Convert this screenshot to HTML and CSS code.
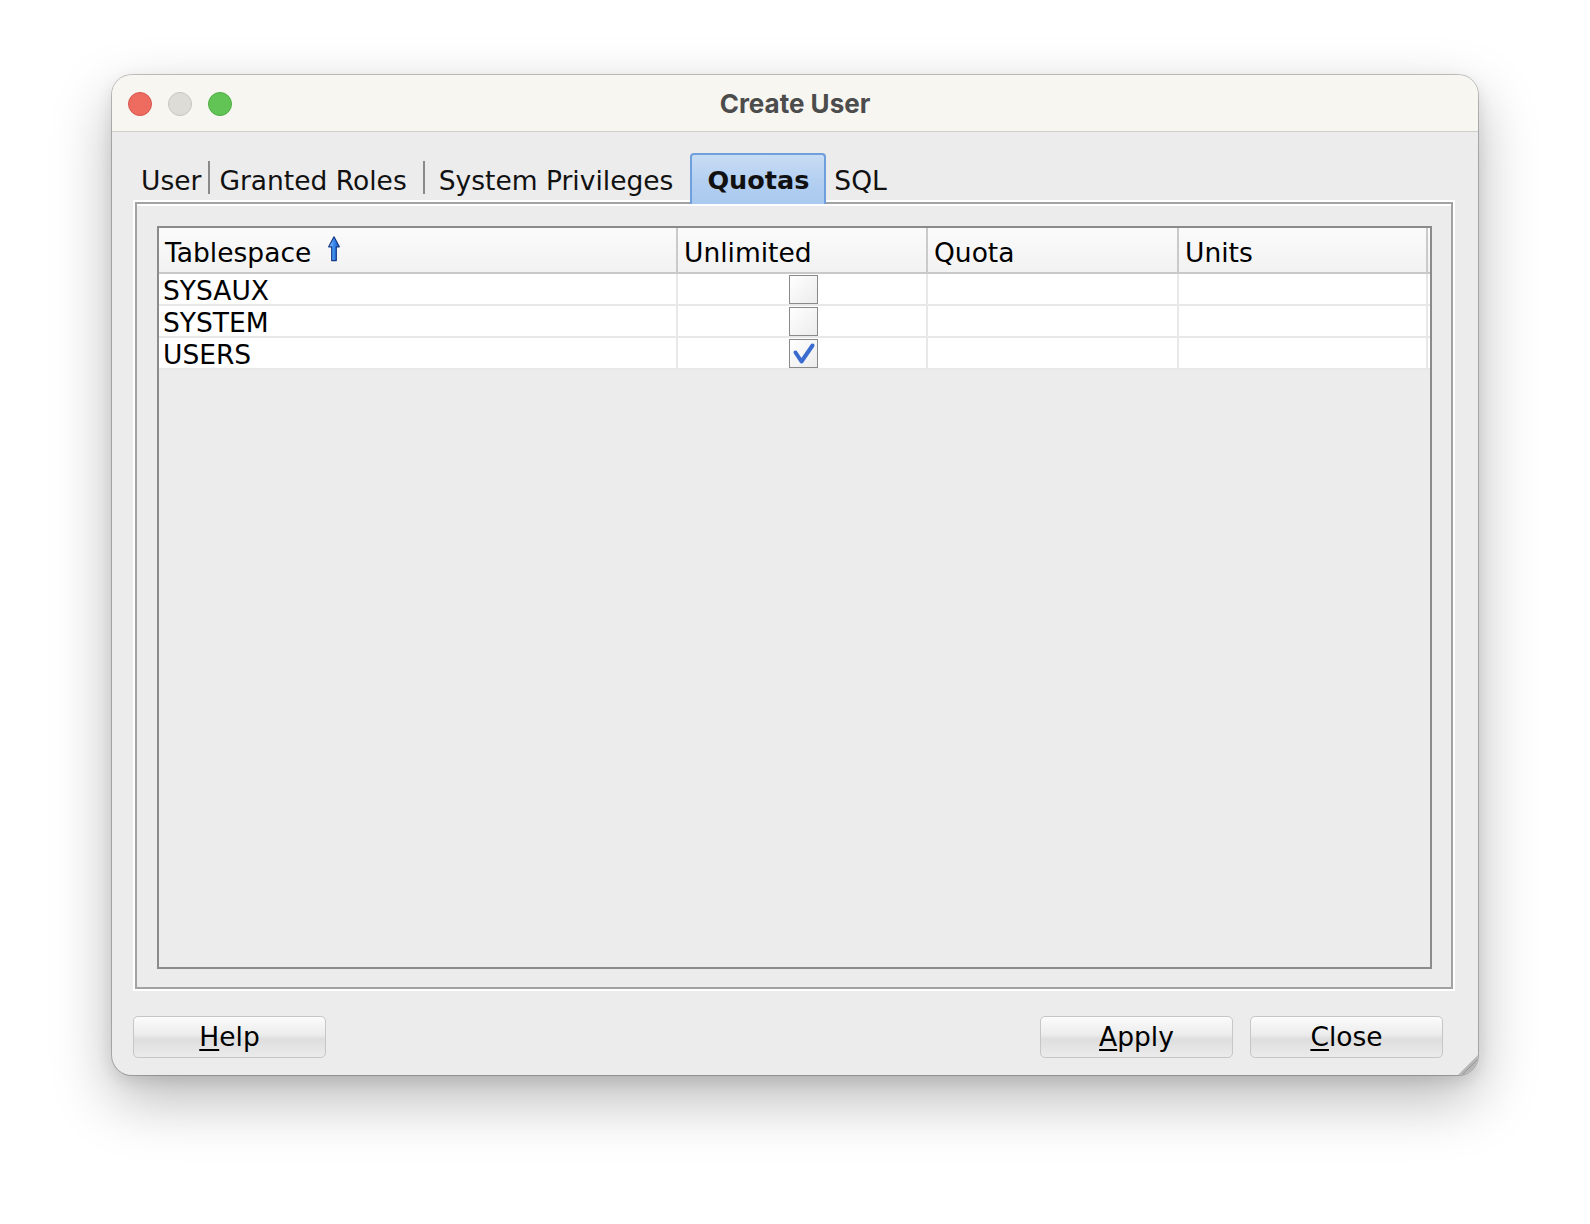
FILE: index.html
```html
<!DOCTYPE html>
<html lang="en">

<head>
    <meta charset="UTF-8">
    <title>Create User</title>
    <link rel="stylesheet" href="styles.css">
</head>

<body>
    <div class="ventana">
        <div class="barra-titulo">
            <div class="semaforo">
                <span class="luz roja"></span>
                <span class="luz gris"></span>
                <span class="luz verde"></span>
            </div>
            <div class="titulo">Create User</div>
            <div></div>
        </div>

        <div class="contenido">
            <div class="pestanas">
                <span class="pestana">User</span>
                <span class="separador"></span>
                <span class="pestana roles">Granted Roles</span>
                <span class="separador ancho"></span>
                <span class="pestana sistema">System Privileges</span>
                <span class="pestana activa">Quotas</span>
                <span class="pestana sql">SQL</span>
            </div>

            <div class="panel">
                <div class="tabla">
                    <div class="fila cabecera">
                        <div class="celda">Tablespace
                            <svg class="orden" width="12" height="26" viewBox="0 0 12 26">
                                <defs>
                                    <linearGradient id="azul" x1="0" y1="0" x2="1" y2="0">
                                        <stop offset="0" stop-color="#a9d4ff" />
                                        <stop offset="0.45" stop-color="#3f8ff0" />
                                        <stop offset="1" stop-color="#1652c4" />
                                    </linearGradient>
                                </defs>
                                <path d="M6 0.8 L11.3 10.8 L8.3 10.8 L8.3 24.6 L3.7 24.6 L3.7 10.8 L0.7 10.8 Z"
                                    fill="url(#azul)" stroke="#143a86" stroke-width="1.2" stroke-linejoin="round" />
                            </svg>
                        </div>
                        <div class="celda">Unlimited</div>
                        <div class="celda">Quota</div>
                        <div class="celda">Units</div>
                    </div>

                    <div class="fila">
                        <div class="celda">SYSAUX</div>
                        <div class="celda centro"><span class="casilla"></span></div>
                        <div class="celda"></div>
                        <div class="celda"></div>
                    </div>
                    <div class="fila">
                        <div class="celda">SYSTEM</div>
                        <div class="celda centro"><span class="casilla"></span></div>
                        <div class="celda"></div>
                        <div class="celda"></div>
                    </div>
                    <div class="fila">
                        <div class="celda">USERS</div>
                        <div class="celda centro">
                            <span class="casilla">
                                <svg width="27" height="27" viewBox="0 0 27 27">
                                    <path d="M5.5 12.5 L11.5 21.5 L22.5 5.5" fill="none" stroke="#3a6bcf"
                                        stroke-width="4" stroke-linecap="round" stroke-linejoin="round" />
                                </svg>
                            </span>
                        </div>
                        <div class="celda"></div>
                        <div class="celda"></div>
                    </div>
                </div>
            </div>

            <div class="botones">
                <button class="boton ayuda"><u>H</u>elp</button>
                <button class="boton aplicar"><u>A</u>pply</button>
                <button class="boton cerrar"><u>C</u>lose</button>
            </div>
        </div>

        <svg class="agarre" width="20" height="20" viewBox="0 0 20 20">
            <path d="M20 0 L20 20 L0 20 Z" fill="#b5b5b5" />
            <path d="M20 4 L4 20 M20 9 L9 20 M20 14 L14 20" stroke="#9a9a9a" stroke-width="1" />
        </svg>
    </div>
</body>

</html>
```

FILE: styles.css
```css
body {
    margin: 0;
    background-color: #ffffff;
    font-family: 'DejaVu Sans', sans-serif;
    padding: 75px 0 0 112px;
    width: 1590px;
    height: 1224px;
    box-sizing: border-box;
    overflow: hidden;
}

.ventana {
    position: relative;
    width: 1366px;
    height: 1000px;
    display: flex;
    flex-direction: column;
    background-color: #ececec;
    border-radius: 20px;
    overflow: hidden;
    box-shadow: 0 0 0 1px rgba(0, 0, 0, 0.22), 0 24px 60px rgba(0, 0, 0, 0.28), 0 6px 16px rgba(0, 0, 0, 0.1);
}

.barra-titulo {
    height: 56px;
    flex: none;
    display: grid;
    grid-template-columns: 1fr auto 1fr;
    align-items: center;
    background-color: #f7f6f1;
    border-bottom: 1px solid #cfcfcb;
}

.semaforo {
    display: flex;
    gap: 16px;
    padding-left: 16px;
    padding-top: 2px;
}

.luz {
    width: 22px;
    height: 22px;
    border-radius: 50%;
    border: 1px solid;
}

.luz.roja {
    background-color: #ee6b60;
    border-color: #d5564c;
}

.luz.gris {
    background-color: #dddcd7;
    border-color: #c7c6c1;
}

.luz.verde {
    background-color: #61c454;
    border-color: #4ead42;
}

.titulo {
    font-family: Inter, sans-serif;
    font-weight: 700;
    font-size: 26px;
    color: #4c4c4c;
}

.contenido {
    flex: 1;
    display: flex;
    flex-direction: column;
    padding: 21px 25px 17px 23px;
    min-height: 0;
}

/* pestañas */
.pestanas {
    display: flex;
    align-items: flex-start;
    height: 49px;
    flex: none;
    font-size: 26.5px;
    color: #111;
    position: relative;
    z-index: 1;
}

.pestana {
    padding: 8px 7px 0 6px;
    line-height: 39px;
    white-space: nowrap;
}

.separador {
    width: 2px;
    height: 33px;
    margin-top: 8px;
    background-color: #8a8a8a;
}

.separador.ancho {
    margin: 8px 8px 0 9px;
}

.pestana.roles {
    padding-left: 9px;
}

.pestana.sistema {
    margin-right: 10px;
}

.pestana.activa {
    box-sizing: border-box;
    padding: 6px 15px 0 15px;
    font-weight: bold;
    font-size: 25.5px;
    background: linear-gradient(#c9ddf4, #b4d0f1 50%, #a9c9ef);
    border: 2px solid #6f9fdc;
    border-bottom: none;
    border-radius: 4px 4px 0 0;
    margin-bottom: -2px;
    height: 51px;
}

.pestana.sql {
    padding-left: 8px;
}

.panel {
    flex: 1;
    display: flex;
    border: 2px solid #a2a2a2;
    box-shadow: 0 0 0 2px #ffffff, inset 0 2px 0 #ffffff;
    padding: 22px 19px 18px 20px;
    min-height: 0;
}

/* tabla */
.tabla {
    flex: 1;
    border: 2px solid #8b8b8b;
    background-color: #ececec;
    font-size: 26.5px;
    color: #000;
}

.fila {
    display: grid;
    grid-template-columns: 519px 250px 251px 249px;
    height: 32px;
    background-color: #ffffff;
    border-bottom: 2px solid #e8e8e8;
    box-sizing: border-box;
}

.fila .celda {
    border-right: 2px solid #e8e8e8;
    padding: 2px 4px 0 4px;
    line-height: 29px;
    white-space: nowrap;
}

.fila.cabecera {
    height: 46px;
    background: linear-gradient(#fbfbfb, #f2f2f2);
    border-bottom: 2px solid #c9c9c9;
}

.fila.cabecera .celda {
    border-right: 2px solid #cacaca;
    padding: 6px 6px 0 6px;
    line-height: 37px;
}

.orden {
    vertical-align: 0;
    margin-left: 8px;
}

.celda.centro {
    display: flex;
    justify-content: center;
    padding: 1px 0 0 2px;
}

.casilla {
    width: 27px;
    height: 27px;
    border: 1px solid #8a8a8a;
    background: linear-gradient(135deg, #ffffff, #ececec);
    display: block;
}

.casilla svg {
    display: block;
}

/* botones */
.botones {
    display: flex;
    gap: 17px;
    margin-top: 27px;
    flex: none;
}

.boton {
    width: 193px;
    height: 42px;
    font-family: 'DejaVu Sans', sans-serif;
    font-size: 26.5px;
    color: #000;
    background: linear-gradient(#fbfbfb, #ececec 45%, #dedede 55%, #ebebeb);
    border: 1px solid #c6c6c6;
    border-radius: 5px;
    padding: 0;
    line-height: 38px;
}

.boton u {
    text-decoration-thickness: 2px;
    text-underline-offset: 3px;
}

.ayuda {
    margin-left: -2px;
    margin-right: auto;
}

.cerrar {
    margin-right: 10px;
}

.agarre {
    position: absolute;
    right: 0;
    bottom: 0;
}
```
